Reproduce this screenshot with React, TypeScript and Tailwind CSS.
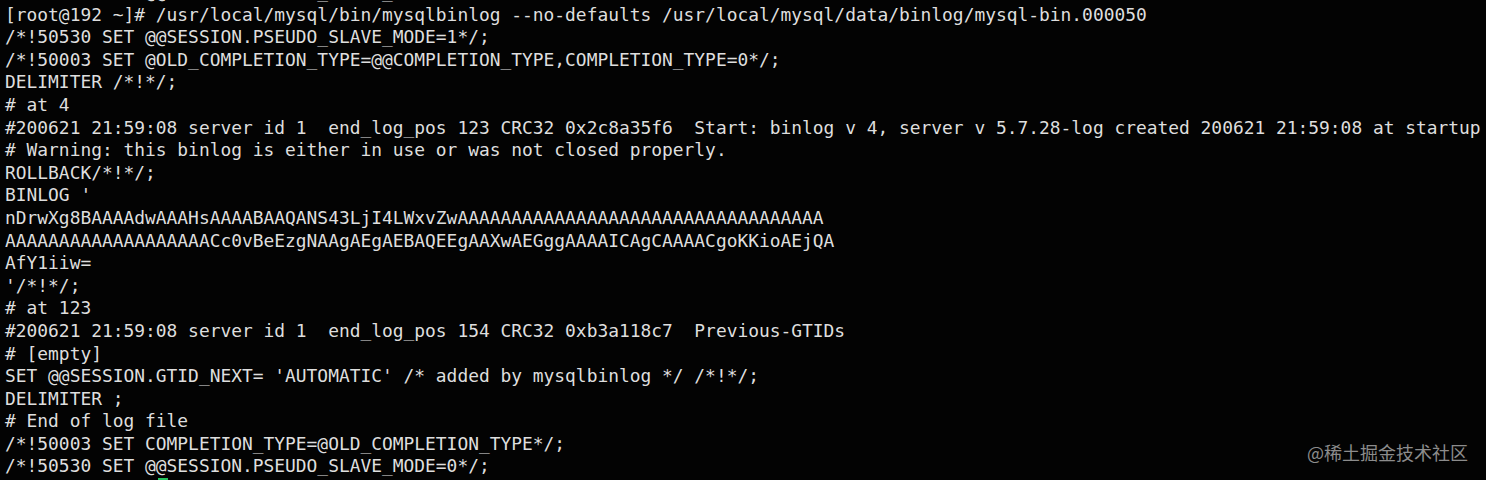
const LINES = [
  "/*!50530 SET @@SESSION.PSEUDO_SLAVE_MODE=0*/;",
  "[root@192 ~]# /usr/local/mysql/bin/mysqlbinlog --no-defaults /usr/local/mysql/data/binlog/mysql-bin.000050",
  "/*!50530 SET @@SESSION.PSEUDO_SLAVE_MODE=1*/;",
  "/*!50003 SET @OLD_COMPLETION_TYPE=@@COMPLETION_TYPE,COMPLETION_TYPE=0*/;",
  "DELIMITER /*!*/;",
  "# at 4",
  "#200621 21:59:08 server id 1  end_log_pos 123 CRC32 0x2c8a35f6  Start: binlog v 4, server v 5.7.28-log created 200621 21:59:08 at startup",
  "# Warning: this binlog is either in use or was not closed properly.",
  "ROLLBACK/*!*/;",
  "BINLOG '",
  "nDrwXg8BAAAAdwAAAHsAAAABAAQANS43LjI4LWxvZwAAAAAAAAAAAAAAAAAAAAAAAAAAAAAAAAAA",
  "AAAAAAAAAAAAAAAAAAACc0vBeEzgNAAgAEgAEBAQEEgAAXwAEGggAAAAICAgCAAAACgoKKioAEjQA",
  "AfY1iiw=",
  "'/*!*/;",
  "# at 123",
  "#200621 21:59:08 server id 1  end_log_pos 154 CRC32 0xb3a118c7  Previous-GTIDs",
  "# [empty]",
  "SET @@SESSION.GTID_NEXT= 'AUTOMATIC' /* added by mysqlbinlog */ /*!*/;",
  "DELIMITER ;",
  "# End of log file",
  "/*!50003 SET COMPLETION_TYPE=@OLD_COMPLETION_TYPE*/;",
  "/*!50530 SET @@SESSION.PSEUDO_SLAVE_MODE=0*/;",
];

export default function App() {
  return (
    <div className="relative h-[480px] w-[1486px] overflow-hidden bg-[#030303]">
      {/* terminal output, first line scrolled half off the top */}
      <div className="-mt-[19px] flex flex-col pl-[5px] font-['DejaVu_Sans_Mono',monospace] text-[17.9px] leading-[22.6px] text-[#dedede] whitespace-pre">
        {LINES.map((line, i) => (
          <div key={i}>{line}</div>
        ))}
        {/* cursor peeking in from the next row */}
        <div className="h-[22.6px]">
          <span className="ml-[153px] inline-block h-[20px] w-[10px] bg-[#22c55e]" />
        </div>
      </div>

      {/* watermark */}
      <div className="absolute right-[18px] bottom-[17px] font-['Noto_Sans_CJK_SC',sans-serif] text-[18px] leading-[22px] text-[#8c8c8c]">
        @稀土掘金技术社区
      </div>
    </div>
  );
}
